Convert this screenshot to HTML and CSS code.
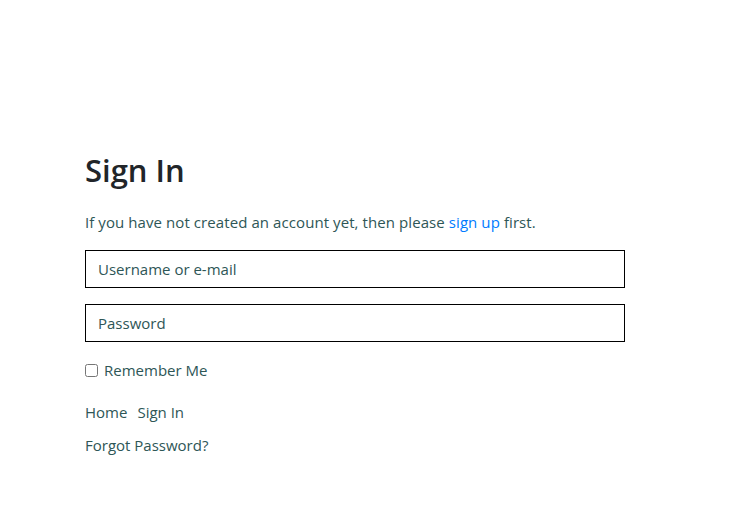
FILE: index.html
```html
<!DOCTYPE html>
<html>
<head>
<meta charset="utf-8">
<link rel="stylesheet" href="styles.css">
</head>
<body>
<main class="page">
  <h1 class="title">Sign In</h1>
  <p class="intro">If you have not created an account yet, then please <a class="link" href="#">sign up</a> first.</p>
  <form class="form">
    <input class="field" type="text" placeholder="Username or e-mail">
    <input class="field" type="password" placeholder="Password">
    <label class="remember"><input class="check" type="checkbox"> Remember Me</label>
  </form>
  <nav class="nav">
    <a class="nav-link" href="#">Home</a>
    <a class="nav-link" href="#">Sign In</a>
  </nav>
  <a class="nav-link forgot" href="#">Forgot Password?</a>
</main>
</body>
</html>
```
FILE: styles.css
```css
html, body {
  margin: 0;
  padding: 0;
  background: #fff;
}
body {
  font-family: "Open Sans", "Noto Sans", sans-serif;
  font-size: 15px;
  color: #2e5656;
}
.page {
  width: 540px;
  padding: 151px 0 0 85px;
  display: flex;
  flex-direction: column;
}
.title {
  margin: 0;
  font-size: 31px;
  font-weight: 600;
  color: #212529;
  line-height: 38px;
}
.intro {
  margin: 23px 0 0;
  line-height: 20px;
  letter-spacing: 0.08px;
}
.link {
  color: #007bff;
  text-decoration: none;
}
.form {
  display: flex;
  flex-direction: column;
  margin-top: 18px;
}
.field {
  box-sizing: border-box;
  height: 38px;
  width: 540px;
  border: 1px solid #000;
  border-radius: 0;
  padding: 0 12px;
  font-family: inherit;
  font-size: 15px;
  color: #2e5656;
  margin-bottom: 16px;
  outline: none;
}
.field::placeholder {
  color: #2e5656;
  opacity: 1;
}
.remember {
  display: flex;
  align-items: center;
  gap: 6px;
  line-height: 20px;
  margin-top: 2px;
}
.check {
  margin: 0;
  width: 13px;
  height: 13px;
}
.nav {
  display: flex;
  gap: 10px;
  margin-top: 22px;
  line-height: 20px;
}
.nav-link {
  color: #2e5656;
  text-decoration: none;
  line-height: 20px;
}
.forgot {
  margin-top: 13px;
  align-self: flex-start;
}
```
